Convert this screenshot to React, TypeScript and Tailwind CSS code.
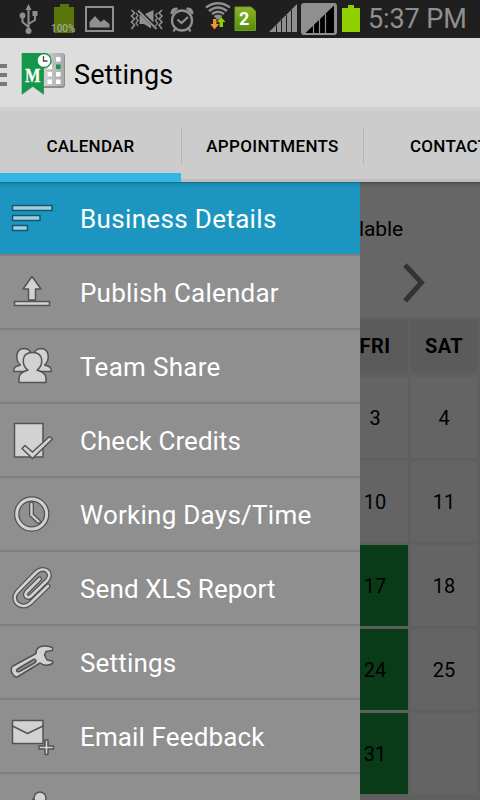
import type { ReactNode } from "react";

const StatusBar = () => {
  return (
    <div className="flex h-[38px] w-full shrink-0 bg-[#1f1f1f] text-[#8f8f8f]">
      {/* usb */}
      <svg className="h-[38px] w-[48px] shrink-0" viewBox="0 0 48 38" fill="none" stroke="currentColor" strokeWidth="2">
        <path d="M28.500 9V30M28.500 27L22.500 22V17M28.500 24L35 20V15" />
        <path d="M28.500 4L31.500 10H25.500Z" fill="currentColor" stroke="none" />
        <circle cx="28.500" cy="31" r="3" fill="currentColor" stroke="none" />
        <circle cx="22.500" cy="15.500" r="2.900" fill="currentColor" stroke="none" />
        <path d="M32.500 11H37.500V16H32.500Z" fill="currentColor" stroke="none" />
      </svg>
      {/* charge level */}
      <div className="relative w-[34px] shrink-0">
        <svg className="h-[38px] w-[34px]" viewBox="48 0 34 38">
          <path d="M60 4H69V7H74V33H54V7H60Z" fill="#57750b" />
        </svg>
        <span className="absolute left-[3px] top-[23px] text-[10px] font-medium leading-[12px] text-[#a3a89a]">100%</span>
      </div>
      {/* picture */}
      <svg className="h-[38px] w-[40px] shrink-0" viewBox="82 0 40 38">
        <rect x="86" y="7" width="27" height="24" fill="none" stroke="currentColor" strokeWidth="2" />
        <path d="M89.500 27.500V22L95 16L100.500 22L104 19.500L109.500 24V27.500Z" fill="currentColor" />
      </svg>
      {/* muted, vibrate */}
      <svg className="h-[38px] w-[44px] shrink-0" viewBox="122 0 44 38" fill="none" stroke="currentColor" strokeWidth="2">
        <path d="M131.500 10L134.500 13L131.500 16L134.500 19L131.500 22L134.500 25L131.500 29" strokeWidth="1.600" />
        <path d="M136 13L138 15.500L136 18L138 20.500L136 23L138 26" strokeWidth="1.300" />
        <path d="M162 10L159 13L162 16L159 19L162 22L159 25L162 29" strokeWidth="1.600" />
        <path d="M157.500 13L155.500 15.500L157.500 18L155.500 20.500L157.500 23L155.500 26" strokeWidth="1.300" />
        <path d="M139.500 15H141L151 25V28.500L144 24H139.500Z" fill="currentColor" stroke="none" />
        <path d="M145 14L153.500 10V22.500Z" fill="currentColor" stroke="none" />
        <path d="M138 10.500L156.500 29" />
      </svg>
      {/* alarm */}
      <svg className="h-[38px] w-[34px] shrink-0" viewBox="166 0 34 38" fill="none" stroke="currentColor" strokeWidth="2.300">
        <circle cx="182" cy="20.500" r="10" />
        <path d="M177.500 19.500L181.500 23L188 17" />
        <path d="M170.500 13.500C170.500 10 173 7 177 7.500L178 9L172 14.500ZM193.500 13.500C193.500 10 191 7 187 7.500L186 9L192 14.500Z" fill="currentColor" stroke="none" />
        <path d="M175.500 28L173.500 31.500M188.500 28L190.500 31.500" />
      </svg>
      {/* wifi */}
      <svg className="h-[38px] w-[33px] shrink-0" viewBox="200 0 33 38" fill="none" stroke="currentColor" strokeWidth="2.400">
        <path d="M206 7.500Q218 -1 230 7.500M209 11Q218 4 227 11M212 14Q218 9.500 224 14" />
        <path d="M213.500 16Q218 13 222.500 16L218 20Z" fill="currentColor" stroke="none" />
        <path d="M213 19H216.500V24H219L214.500 29.500L210.500 24H213Z" fill="#f79431" stroke="none" />
        <path d="M221 17L225.500 22H223V27H219.500V22H217Z" fill="#8fd100" stroke="none" />
      </svg>
      {/* active sim */}
      <div className="relative w-[31px] shrink-0">
        <svg className="h-[38px] w-[31px]" viewBox="233 0 31 38">
          <defs>
            <linearGradient id="sim" x2="0" y2="1">
              <stop stopColor="#8bb328" />
              <stop offset="1" stopColor="#558d0c" />
            </linearGradient>
          </defs>
          <path d="M235 7H251L255.500 11V30.500H235Z" fill="url(#sim)" stroke="#729c22" />
        </svg>
        <span className="absolute left-[6px] top-[9px] text-[18px] font-bold leading-[20px] text-white">2</span>
      </div>
      {/* signal bars */}
      <svg className="h-[38px] w-[75px] shrink-0" viewBox="264 0 75 38">
        <path d="M269 32L297 4V32Z" fill="currentColor" />
        <path d="M276.500 25V32M281.500 20V32M286.500 15V32M291.500 10V32" stroke="#1f1f1f" />
        <rect x="301" y="3" width="36" height="32" rx="3" fill="currentColor" />
        <path d="M305.500 33L334 5.500V33Z" fill="#000" />
        <path d="M313.500 25V33M319.500 19V33M325.500 14V33" stroke="#8f8f8f" strokeWidth="1.200" />
      </svg>
      {/* battery */}
      <svg className="h-[38px] w-[30px] shrink-0" viewBox="339 0 30 38">
        <path d="M348 5H354V8H360V32H342V8H348Z" fill="#8fd100" />
      </svg>
      <span className="-ml-px whitespace-nowrap text-[27px] leading-[38px] tracking-[-0.1px]">5:37 PM</span>
    </div>
  );
};

const AppLogo = () => {
  return (
    <svg className="h-[48px] w-[48px] shrink-0" viewBox="0 0 48 48">
      <defs>
        <linearGradient id="board" x2="1" y2="0">
          <stop stopColor="#d7d7d7" />
          <stop offset="1" stopColor="#aaa" />
        </linearGradient>
      </defs>
      <path d="M20 5H42Q45 5 45 8V37Q45 40 42 40H20Z" fill="#8e8e8e" />
      <path d="M20 5H42Q44 5 44 8V36Q44 38 42 38H20Z" fill="url(#board)" />
      <path d="M36 9H40.500V13.500H36ZM27.500 16.500H32V21H27.500ZM27.500 24H32V28.500H27.500ZM36 24H40.500V28.500H36ZM27.500 31.500H32V36H27.500ZM36 31.500H40.500V36H36Z" fill="#fff" />
      <path d="M36 16.500H40.500V21H36Z" fill="#15964a" />
      <path d="M2 5H24V47L13 39L2 47Z" fill="#777" opacity="0.500" />
      <path d="M1.700 5H23.800V46.500L12.700 38.500L1.700 46.500Z" fill="#15964a" />
      <circle cx="24" cy="12.500" r="7" fill="#fff" stroke="#15964a" strokeWidth="1.300" />
      <path d="M23.500 8V13H27.500" fill="none" stroke="#444" strokeWidth="1.300" />
      <text x="12.700" y="33.500" textAnchor="middle" fontSize="19" fontWeight="700" fontFamily="Liberation Serif, serif" fill="#fff" stroke="#fff" strokeWidth="0.300" textLength="15.500" lengthAdjust="spacingAndGlyphs">M</text>
    </svg>
  );
};

const UserShape = () => (
  <>
    <path d="M20.500 35C15.500 31 14.500 19 24 18.500C33.500 19 32.500 30 28 34L34 41.500H13.500C13.500 37 16.500 36 20.500 35Z" />
    <path d="M44.500 35C49.500 31 50.500 19 41 18.500C31.500 19 32.500 30 37 34L31 41.500H51.500C51.500 37 48.500 36 44.500 35Z" />
    <path d="M28 40C22 36 20 22.500 32.500 22.500C45 22.500 43 36 37 40C42 41.500 46 44 46 48V52.500H19V48C19 44 23 41.500 28 40Z" />
  </>
);

const items: { label: string; track: string; icon: ReactNode }[] = [
  {
    label: "Business Details",
    track: "tracking-[0.34px]",
    icon: <path d="M12.500 23.500H52V28.500H12.500ZM12.500 33.500H40V38.500H12.500ZM12.500 43.500H27.500V48.500H12.500Z" fill="#9dcfe3" stroke="#17566b" />,
  },
  {
    label: "Publish Calendar",
    track: "tracking-[0.22px]",
    icon: <path d="M32 20.500L41 33H35.500V44H28.500V33H23ZM14.500 45.500H49.500V49.500H14.500Z" />,
  },
  { label: "Team Share", track: "tracking-[0.3px]", icon: <UserShape /> },
  {
    label: "Check Credits",
    track: "tracking-[0.04px]",
    icon: (
      <>
        <path d="M14.500 19.500H43V53H14.500Z" />
        <path d="M22 44.500L25 41.500L32.500 48L49.500 32.500L52.500 35L32.500 54.500Z" />
      </>
    ),
  },
  {
    label: "Working Days/Time",
    track: "tracking-[0.26px]",
    icon: (
      <>
        <circle cx="31.700" cy="36" r="15" fill="none" strokeWidth="5.500" />
        <circle cx="31.700" cy="36" r="15" fill="none" stroke="#d2d2d2" strokeWidth="3" />
        <path d="M31.500 26V37L38.500 43.500" fill="none" strokeWidth="5" />
        <path d="M31.500 26V37L38.500 43.500" fill="none" stroke="#d2d2d2" strokeWidth="2.300" />
      </>
    ),
  },
  {
    label: "Send XLS Report",
    track: "tracking-[0.1px]",
    icon: (
      <>
        <path d="M48 34L30 51.500C21 58.500 10 49 17 40L36 20.500C44 13 54 21 47 28.500L31 44C28 47 23.500 44 26.500 40L39.500 27" fill="none" strokeWidth="5.200" />
        <path d="M48 34L30 51.500C21 58.500 10 49 17 40L36 20.500C44 13 54 21 47 28.500L31 44C28 47 23.500 44 26.500 40L39.500 27" fill="none" stroke="#d2d2d2" strokeWidth="2.600" />
      </>
    ),
  },
  {
    label: "Settings",
    track: "tracking-[0.18px]",
    icon: (
      <>
        <path d="M13 40L36 27.500C36 20 43 18.500 52.500 21.500V24.500L46 25.500L44.500 29L47 34L52.500 35V37.500C46 41 42 38.500 40 37L18 50.500C14 53 8.500 44 13 40Z" />
        <path d="M17.500 43L33.500 33.500C36 32.500 37 36 34.500 37L19.500 45.500C17 46.500 15.500 44.500 17.500 43Z" fill="#8f8f8f" />
      </>
    ),
  },
  {
    label: "Email Feedback",
    track: "tracking-[0.13px]",
    icon: (
      <>
        <path d="M12.500 20.500H43V43.500H12.500Z" />
        <path d="M12.500 26L27.500 33.500L43 26" fill="none" />
        <path d="M45 40H48V46H53.500V49H48V54.500H45V49H39V46H45Z" />
      </>
    ),
  },
];

const Drawer = () => {
  return (
    <div className="flex w-[360px] shrink-0 flex-col overflow-hidden bg-[#8f8f8f]">
      {items.map((item, i) => (
        <div
          key={item.label}
          className={`flex h-[74px] shrink-0 items-center border-b-2 border-[#7f7f7f] ${i === 0 ? "bg-[#1c96c0]" : ""}`}
        >
          <svg className="h-[72px] w-[60px] shrink-0" viewBox="0 0 60 72" fill="#d2d2d2" stroke="#535353" strokeWidth="1.500" strokeLinejoin="round" strokeLinecap="round">
            {item.icon}
          </svg>
          <span className={`ml-5 whitespace-nowrap pt-0.5 text-[26px] leading-8 text-white ${item.track}`}>{item.label}</span>
        </div>
      ))}
      <svg className="h-[72px] w-[60px] shrink-0" viewBox="0 0 60 72" fill="#d2d2d2" stroke="#535353" strokeWidth="1.500">
        <path d="M34 24.500L31 28H40V24Z" />
        <circle cx="40" cy="24" r="6" />
      </svg>
    </div>
  );
};

const weeks = [
  ["3", "4"],
  ["10", "11"],
  ["17", "18"],
  ["24", "25"],
  ["31", ""],
];

const Calendar = () => {
  return (
    <div className="flex flex-1 flex-col overflow-hidden bg-[#666] text-black">
      <div className="flex h-[135px] shrink-0 flex-col">
        <p className="-ml-px pt-[34px] text-[21px] leading-[26px] tracking-[-0.1px]">lable</p>
        <svg className="ml-[42px] mt-[18px] h-[44px] w-[26px]" viewBox="0 0 26 44" fill="none" stroke="#333" strokeWidth="5">
          <path d="M3 5L19.500 22.500L3 41" />
        </svg>
      </div>
      <div className="-ml-[18px] flex w-[138px] flex-1 flex-col bg-[#5f5f5f] pt-[3px]">
        <div className="mb-[6px] flex h-[51px] shrink-0 gap-[3px] text-[20px] font-bold leading-[52px] tracking-[0.4px]">
          <div className="w-[66px] bg-[#5b5b5b] text-center">FRI</div>
          <div className="w-[66px] bg-[#5b5b5b] text-center">SAT</div>
        </div>
        <div className="flex flex-col gap-[3px] text-[20px] leading-[82px]">
          {weeks.map(([fri, sat], i) => (
            <div key={fri} className="flex h-[81px] gap-[3px] text-center">
              <div className={`w-[66px] ${i > 1 ? "bg-[#093b19]" : "bg-[#646464]"}`}>{fri}</div>
              <div className="w-[66px] bg-[#646464]">{sat}</div>
            </div>
          ))}
        </div>
      </div>
    </div>
  );
};

const App = () => {
  return (
    <div className="flex h-[800px] w-[480px] flex-col overflow-hidden bg-[#666] font-[Roboto,sans-serif]">
      <StatusBar />
      <div className="flex h-[69px] shrink-0 items-center bg-[#ddd]">
        <div className="flex w-[7px] flex-col gap-[5px] pt-[5px]">
          <div className="h-1 bg-[#77777a]"></div>
          <div className="h-1 bg-[#77777a]"></div>
          <div className="h-1 bg-[#77777a]"></div>
        </div>
        <div className="ml-[13px] pb-[2px]">
          <AppLogo />
        </div>
        <h1 className="ml-[6px] pt-[4px] text-[27px] leading-8 tracking-[0.1px] text-black">Settings</h1>
      </div>
      <div className="flex h-[75px] shrink-0 overflow-hidden border-t-4 border-[#d0d0d0] bg-[#ccc] text-[17px] font-medium tracking-[0.25px] text-black">
        <div className="flex w-[181px] shrink-0 items-center justify-center border-b-[9px] border-[#33b5e5] pt-[10px]">CALENDAR</div>
        <div className="flex flex-1 border-b-[3px] border-[#bfbfbf] pt-[3px]">
          <div className="mt-[14px] h-9 w-px shrink-0 bg-[#b4b4b4]"></div>
          <div className="flex w-[181px] shrink-0 items-center justify-center pt-px tracking-[0.33px]">APPOINTMENTS</div>
          <div className="mt-[14px] h-9 w-px shrink-0 bg-[#b4b4b4]"></div>
          <div className="ml-[46px] flex items-center pt-px">CONTACTS</div>
        </div>
      </div>
      <div className="relative flex min-h-0 flex-1">
        <Drawer />
        <Calendar />
        <div className="absolute inset-x-0 top-0 h-[6px] border-t border-black/25 bg-linear-to-b from-black/12 to-transparent"></div>
      </div>
    </div>
  );
};

export default App;
